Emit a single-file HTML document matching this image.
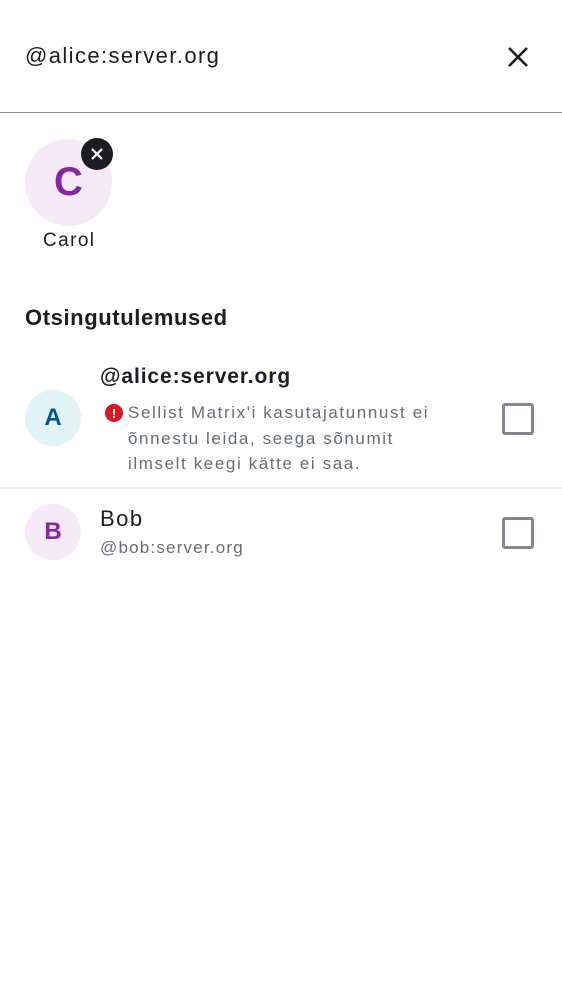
<!DOCTYPE html>
<html><head><style>
body{margin:0;width:562px;height:1000px;background:#fff;font-family:"Liberation Sans",sans-serif;color:#1b1d22;position:relative;overflow:hidden}
.a{position:absolute;white-space:nowrap}
.av{position:absolute;border-radius:50%;display:flex;align-items:center;justify-content:center;font-weight:bold}
.cb{position:absolute;width:26px;height:26px;border:3px solid #818790;border-radius:3px}
</style></head><body>
<div class="a" style="left:25px;top:43px;font-size:22px;letter-spacing:1.4px">@alice:server.org</div>
<svg class="a" style="left:506px;top:45px" width="24" height="24" viewBox="0 0 24 24"><path d="M3 3L21 21M21 3L3 21" stroke="#1b1d22" stroke-width="2.6"/></svg>
<div class="a" style="left:0;top:112px;width:562px;height:1px;background:#8a8d93"></div>
<div class="av" style="left:25px;top:139px;width:87px;height:87px;background:#f7eaf8;color:#8626a0;font-size:40px">C</div>
<div class="av" style="left:81px;top:138px;width:32px;height:32px;background:#1b1d22"><svg width="14" height="14" viewBox="0 0 14 14"><path d="M2 2L12 12M12 2L2 12" stroke="#fff" stroke-width="2.2"/></svg></div>
<div class="a" style="left:43px;top:230px;font-size:19px;letter-spacing:1.4px">Carol</div>
<div class="a" style="left:25px;top:305px;font-size:22px;font-weight:bold;letter-spacing:0.6px">Otsingutulemused</div>
<div class="av" style="left:25px;top:390px;width:56px;height:56px;background:#e2f3f8;color:#005589;font-size:24px">A</div>
<div class="a" style="left:100px;top:365px;font-size:21px;font-weight:bold;letter-spacing:0.9px">@alice:server.org</div>
<div class="av" style="left:105px;top:404px;width:18px;height:18px;background:#d51928;color:#fff;font-size:13px">!</div>
<div class="a" style="left:128px;top:400px;font-size:17px;color:#656d77;line-height:25.5px;letter-spacing:1.6px">Sellist Matrix'i kasutajatunnust ei<br>õnnestu leida, seega sõnumit<br>ilmselt keegi kätte ei saa.</div>
<div class="cb" style="left:502px;top:403px"></div>
<div class="a" style="left:0;top:487px;width:562px;height:2px;background:#eef0f2"></div>
<div class="av" style="left:25px;top:504px;width:56px;height:56px;background:#f7eaf8;color:#8626a0;font-size:24px">B</div>
<div class="a" style="left:100px;top:506px;font-size:22px;letter-spacing:1.5px">Bob</div>
<div class="a" style="left:100px;top:538px;font-size:17px;color:#656d77;letter-spacing:1.2px">@bob:server.org</div>
<div class="cb" style="left:502px;top:517px"></div>
</body></html>
